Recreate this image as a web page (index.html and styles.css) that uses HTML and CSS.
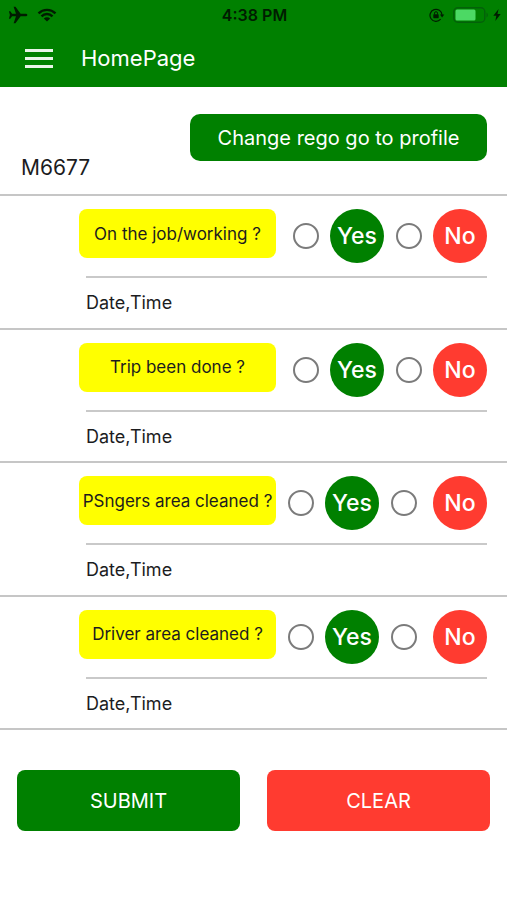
FILE: index.html
```html
<!DOCTYPE html>
<html lang="en">
<head>
<meta charset="utf-8">
<meta name="viewport" content="width=device-width, initial-scale=1">
<title>HomePage</title>
<link rel="stylesheet" href="styles.css">
</head>
<body>
<header class="header">
  <div class="status">
    <div class="status-side">
      <svg class="plane" viewBox="0 0 20 18" aria-hidden="true"><path d="M19.4 9c0-1-1-1.300-2-1.300h-4.800L7.500.8H5.600L8 7.700H4.100L2.300 5.200H.9L1.900 9 .9 12.800h1.400l1.800-2.500H8L5.600 17.200h1.900l5.100-6.900h4.800c1 0 2-.3 2-1.300z"/></svg>
      <svg class="wifi" viewBox="0 0 20 14" aria-hidden="true"><path d="M1.500 5.300a12.200 12.200 0 0 1 17 0M4.500 8.300a7.900 7.900 0 0 1 11 0" fill="none" stroke="currentColor" stroke-width="2.400"/><path d="M10 13.600 6.800 10.500a4.600 4.600 0 0 1 6.400 0z"/></svg>
    </div>
    <time class="clock">4:38 PM</time>
    <div class="status-side status-end">
      <svg class="lock" viewBox="0 0 16 14" aria-hidden="true"><path d="M11.600 11.200A6 6 0 1 1 13 7" fill="none" stroke="currentColor" stroke-width="1.200"/><path d="M10.900 6.600h4.400L13.100 9.600z"/><rect x="4.300" y="6.200" width="5.400" height="4" rx=".6"/><path d="M5.500 6.500V5.200a1.500 1.500 0 0 1 3 0v1.300" fill="none" stroke="currentColor"/></svg>
      <svg class="battery" viewBox="0 0 36 16" aria-hidden="true"><rect x=".8" y=".8" width="31" height="14.400" rx="4" fill="none" stroke="#04600a" stroke-width="1.400"/><rect class="charge" x="2.500" y="2.500" width="20" height="11" rx="1.500"/><path d="M33.500 5.500c1.800.7 1.800 4.300 0 5z" fill="#04600a"/></svg>
      <svg class="bolt" viewBox="0 0 8 12" aria-hidden="true"><path d="M5.600 0 .3 6.700h3L2.300 12l5.400-7h-3.200z"/></svg>
    </div>
  </div>
  <div class="appbar">
    <button class="menu" type="button" aria-label="Menu"><span></span><span></span><span></span></button>
    <h1 class="title">HomePage</h1>
  </div>
</header>
<main>
  <section class="vehicle">
    <p class="rego">M6677</p>
    <button class="profile" type="button">Change rego go to profile</button>
  </section>
  <form>
    <div class="checks">
      <section class="check">
        <div class="question" role="radiogroup" aria-labelledby="q1">
          <h2 class="prompt" id="q1">On the job/working ?</h2>
          <input class="radio" type="radio" name="job" id="job-yes"><label class="answer yes" for="job-yes">Yes</label>
          <input class="radio" type="radio" name="job" id="job-no"><label class="answer no" for="job-no">No</label>
        </div>
        <p class="stamp">Date,Time</p>
      </section>
      <section class="check">
        <div class="question" role="radiogroup" aria-labelledby="q2">
          <h2 class="prompt" id="q2">Trip been done ?</h2>
          <input class="radio" type="radio" name="trip" id="trip-yes"><label class="answer yes" for="trip-yes">Yes</label>
          <input class="radio" type="radio" name="trip" id="trip-no"><label class="answer no" for="trip-no">No</label>
        </div>
        <p class="stamp">Date,Time</p>
      </section>
      <section class="check">
        <div class="question wide" role="radiogroup" aria-labelledby="q3">
          <h2 class="prompt" id="q3">PSngers area cleaned ?</h2>
          <input class="radio" type="radio" name="area" id="area-yes"><label class="answer yes" for="area-yes">Yes</label>
          <input class="radio" type="radio" name="area" id="area-no"><label class="answer no" for="area-no">No</label>
        </div>
        <p class="stamp">Date,Time</p>
      </section>
      <section class="check">
        <div class="question wide" role="radiogroup" aria-labelledby="q4">
          <h2 class="prompt" id="q4">Driver area cleaned ?</h2>
          <input class="radio" type="radio" name="driver" id="driver-yes"><label class="answer yes" for="driver-yes">Yes</label>
          <input class="radio" type="radio" name="driver" id="driver-no"><label class="answer no" for="driver-no">No</label>
        </div>
        <p class="stamp">Date,Time</p>
      </section>
    </div>
    <div class="actions">
      <button class="action submit" type="submit">SUBMIT</button>
      <button class="action clear" type="reset">CLEAR</button>
    </div>
  </form>
</main>
</body>
</html>
```
FILE: styles.css
```css
:root {
  --green: #008000;
  --red: #ff3b30;
  --line: #c6c6c6;
}

* {
  box-sizing: border-box;
}

body {
  margin: 0;
  background: #fff;
  color: #1c1c1e;
  font-family: Inter, "Liberation Sans", sans-serif;
}

h1, h2, p {
  margin: 0;
  font-weight: 400;
}

button {
  border: 0;
  font: inherit;
  color: #fff;
}

.header {
  background: var(--green);
  color: #fff;
}

.status {
  display: grid;
  grid-template-columns: 1fr auto 1fr;
  align-items: center;
  height: 29px;
  padding: 0 6px 0 8px;
  color: #001c00;
}

.status svg {
  fill: currentColor;
}

.status-side {
  display: flex;
  align-items: center;
  gap: 9px;
}

.status-end {
  justify-content: flex-end;
  gap: 4px;
}

.plane {
  width: 20px;
  height: 18px;
}

.wifi {
  width: 20px;
  height: 14px;
}

.clock {
  font-size: 16px;
  font-weight: 600;
}

.lock {
  width: 16px;
  height: 14px;
  margin-right: 4px;
}

.battery {
  width: 36px;
  height: 16px;
}

.status .charge {
  fill: #4cd964;
}

.bolt {
  width: 8px;
  height: 12px;
}

.appbar {
  display: flex;
  align-items: center;
  gap: 28px;
  height: 58px;
  padding: 0 25px;
}

.menu {
  display: grid;
  gap: 5px;
  width: 28px;
  padding: 0;
  background: none;
}

.menu span {
  height: 3px;
  background: #e9f5e9;
}

.title {
  font-size: 22px;
}

.vehicle {
  display: flex;
  align-items: flex-end;
  justify-content: space-between;
  padding: 27px 20px 33px 21px;
}

.rego {
  margin-bottom: -20px;
  font-size: 21px;
  line-height: 26px;
}

.profile {
  width: 297px;
  height: 47px;
  padding: 0;
  border-radius: 10px;
  background: var(--green);
  font-size: 20px;
}

.checks {
  display: grid;
  grid-auto-rows: 1fr;
  min-height: 536px;
  border-bottom: 2px solid var(--line);
}

.check {
  padding: 13px 20px 0 79px;
  border-top: 2px solid var(--line);
}

.question {
  display: grid;
  grid-template-columns: 1fr 26px 54px 27px 54px;
  column-gap: 11px;
  align-items: center;
}

.question .prompt {
  margin-right: 6px;
}

.prompt {
  display: flex;
  align-items: center;
  justify-content: center;
  align-self: start;
  height: 49px;
  border-radius: 8px;
  background: #ff0;
  font-size: 17px;
  white-space: nowrap;
}

.wide {
  grid-template-columns: 1fr 26px 54px 27px 59px;
}

.wide .prompt {
  margin-right: 1px;
}

.radio {
  appearance: none;
  justify-self: end;
  width: 26px;
  height: 26px;
  margin: 0;
  border: 2px solid #7b7b7b;
  border-radius: 50%;
}

.radio:checked {
  background: radial-gradient(#555 45%, #fff 50%);
}

.answer {
  display: grid;
  place-items: center;
  justify-self: end;
  width: 54px;
  height: 54px;
  border-radius: 50%;
  color: #fff;
  font-size: 23px;
  font-weight: 500;
}

.yes {
  background: var(--green);
}

.no {
  background: var(--red);
}

.stamp {
  margin: 13px 0 0 7px;
  padding-top: 13px;
  border-top: 2px solid #c9c9c9;
  font-size: 18px;
  line-height: 24px;
}

.actions {
  display: grid;
  grid-template-columns: 1fr 1fr;
  gap: 27px;
  padding: 40px 17px;
}

.action {
  height: 61px;
  border-radius: 8px;
  font-size: 20px;
}

.submit {
  background: var(--green);
}

.clear {
  background: var(--red);
}
```
